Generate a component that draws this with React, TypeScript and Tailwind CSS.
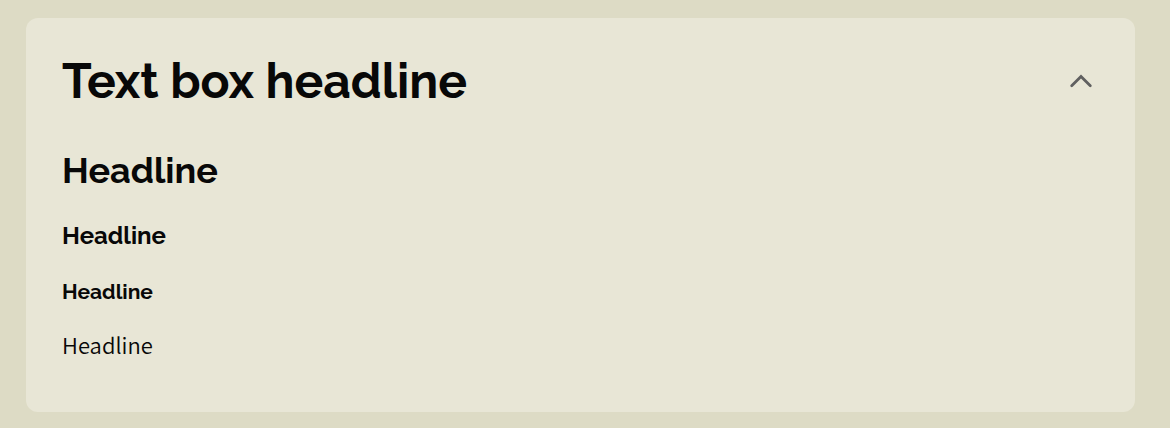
export default function App() {
  return (
    <main className="min-h-screen bg-[#dddbc5] pl-[26px] pr-[35px] pt-[18px] pb-4 text-[#080808]">
      <section className="rounded-xl bg-[#e8e6d6] px-9 pt-[31px] pb-[52px]">
        <div className="flex items-center justify-between pr-1.5">
          <h1 className="font-['Raleway','Inter',sans-serif] text-[48px] leading-[64px] font-bold">Text box headline</h1>
          <button type="button" aria-label="Collapse text box" aria-expanded="true" className="text-[#606060]">
            <svg width="24" height="24" viewBox="0 0 24 24" fill="none" stroke="currentColor" strokeWidth="2.8" strokeLinecap="round" strokeLinejoin="miter">
              <path d="M2.7 16.8 12 7.5l9.3 9.3" />
            </svg>
          </button>
        </div>
        <div className="font-['Raleway','Inter',sans-serif] font-bold">
          <h2 className="mt-[33px] text-[36px] leading-[48px]">Headline</h2>
          <h3 className="mt-6 text-[24px] leading-[36px]">Headline</h3>
          <h4 className="mt-6 text-[21px] leading-[28px]">Headline</h4>
        </div>
        <p className="mt-[22px] font-['Noto_Sans_CJK_SC_DemiLight','Noto_Sans_CJK_SC','Noto_Sans',sans-serif] text-[22px] leading-8 font-[350]">Headline</p>
      </section>
    </main>
  );
}
